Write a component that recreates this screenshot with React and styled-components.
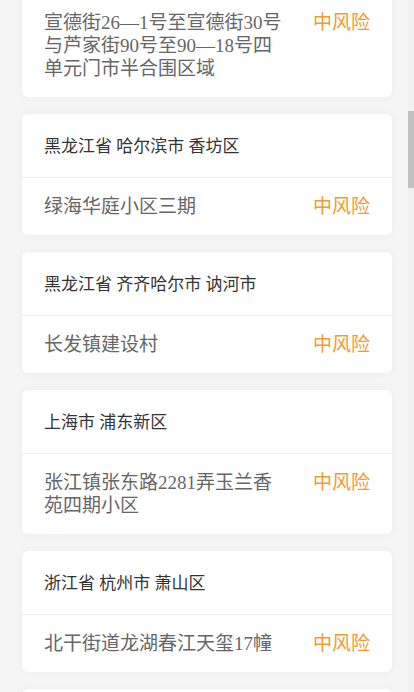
import React, { useLayoutEffect, useRef, useState } from "react";
import styled, { createGlobalStyle } from "styled-components";

const GlobalStyle = createGlobalStyle`
  html, body {
    margin: 0;
    padding: 0;
    background: #f5f5f5;
    font-family: "Liberation Serif", "Noto Sans CJK SC", serif;
  }
  * { box-sizing: border-box; }
`;

const Scroller = styled.div`
  position: relative;
  height: 100vh;
  overflow-y: auto;
  background: #f5f5f5;
  scrollbar-width: none;
  &::-webkit-scrollbar {
    display: none;
  }
`;

const Track = styled.div`
  position: fixed;
  top: 0;
  right: 0;
  width: 6px;
  height: 100vh;
  background: #f1f1f1;
`;

const Thumb = styled.div`
  position: absolute;
  left: 0;
  width: 6px;
  background: #c1c1c1;
`;

const List = styled.div`
  display: flex;
  flex-direction: column;
  gap: 17px;
  padding: 17px 22px;
`;

const Card = styled.section`
  background: #fff;
  border-radius: 6px;
  box-shadow: 0 0 8px rgba(0, 0, 0, 0.04);
  overflow: hidden;
`;

const Region = styled.div`
  padding: 21px 22px 19px;
  font-size: 17px;
  line-height: 23px;
  color: #333;
  border-bottom: 1px solid #ececec;
`;

const Detail = styled.div`
  display: flex;
  justify-content: space-between;
  align-items: flex-start;
  padding: 17px 22px;
`;

const Address = styled.div`
  width: 242px;
  font-size: 19px;
  line-height: 23px;
  color: #666;
`;

const Risk = styled.span`
  flex: none;
  font-size: 19px;
  line-height: 23px;
  color: ${(p) => (p.$level === "high" ? "#e0452b" : "#f29a2e")};
`;

const AREAS = [
  ["黑龙江省 哈尔滨市 道里区", "安静街道爱建社区爱建新城小区B区"],
  ["黑龙江省 哈尔滨市 道外区", "靖宇街道南勋陶瓷城南十四道街19号院"],
  ["黑龙江省 哈尔滨市 南岗区", "和兴路街道学府四道街8号小区"],
  ["黑龙江省 哈尔滨市 香坊区", "公滨路保利水韵长滩小区"],
  ["黑龙江省 哈尔滨市 松北区", "利民街道学院路1号"],
  ["黑龙江省 哈尔滨市 平房区", "友协街道友协大街联盟小区及周边门市"],
  ["黑龙江省 哈尔滨市 南岗区", "宣德街26—1号至宣德街30号与芦家街90号至90—18号四单元门市半合围区域", "target"],
  ["黑龙江省 哈尔滨市 香坊区", "绿海华庭小区三期"],
  ["黑龙江省 齐齐哈尔市 讷河市", "长发镇建设村"],
  ["上海市 浦东新区", "张江镇张东路2281弄玉兰香苑四期小区"],
  ["浙江省 杭州市 萧山区", "北干街道龙湖春江天玺17幢"],
  ["浙江省 杭州市 西湖区", "蒋村街道西溪诚园12幢"],
  ["浙江省 宁波市 北仑区", "霞浦街道下三山村"],
  ["浙江省 绍兴市 上虞区", "曹娥街道金鼎花苑"],
  ["江苏省 南京市 江宁区", "禄口街道石埝村"],
  ["江苏省 扬州市 邗江区", "汊河街道中集紫金文昌小区"],
  ["江苏省 苏州市 吴中区", "长桥街道新家园小区"],
  ["河南省 郑州市 二七区", "京广路街道长江路1号院"],
  ["河南省 郑州市 金水区", "丰产路街道农科路小区"],
  ["河南省 许昌市 禹州市", "钧台街道八一社区"],
  ["河南省 安阳市 文峰区", "宝莲寺镇南流寺村"],
  ["云南省 西双版纳州 勐腊县", "勐腊镇曼龙代村委会"],
  ["云南省 德宏州 瑞丽市", "姐告国门社区"],
  ["内蒙古自治区 呼和浩特市 新城区", "东街街道海东路小区"],
  ["内蒙古自治区 额济纳旗", "达来呼布镇怡和家园小区"],
  ["陕西省 西安市 雁塔区", "电子城街道丈八五路佳家园"],
  ["陕西省 西安市 长安区", "郭杜街道西北大学南校区"],
  ["陕西省 咸阳市 秦都区", "人民路街道东方花园小区"],
  ["四川省 成都市 郫都区", "犀浦街道恒大天府半岛"],
  ["四川省 成都市 锦江区", "春熙路街道正科甲巷"],
  ["广东省 深圳市 南山区", "招商街道四海社区"],
  ["广东省 深圳市 龙岗区", "布吉街道长龙社区"],
  ["广东省 东莞市", "长安镇锦厦社区"],
  ["广东省 广州市 番禺区", "钟村街道祈福新邨"],
  ["天津市 津南区", "辛庄镇辛庄村"],
  ["天津市 河北区", "鸿顺里街道靖江路小区"],
  ["北京市 丰台区", "新村街道富锦嘉园"],
  ["北京市 朝阳区", "麦子店街道枣营北里"],
  ["辽宁省 大连市 庄河市", "城关街道仙湖社区"],
  ["辽宁省 沈阳市 和平区", "长白街道万科城小区"],
  ["吉林省 长春市 朝阳区", "永昌街道西安大路小区"],
  ["吉林省 吉林市 船营区", "致和街道锦江社区"],
  ["山东省 青岛市 李沧区", "九水街道万科城"],
  ["福建省 厦门市 同安区", "西柯街道下山头村"],
];

export default function App() {
  const scrollerRef = useRef(null);
  const targetRef = useRef(null);
  const [thumb, setThumb] = useState({ top: 0, height: 0 });

  const measure = () => {
    const el = scrollerRef.current;
    if (!el) return;
    const { scrollTop, scrollHeight, clientHeight } = el;
    setThumb({
      top: (scrollTop / scrollHeight) * clientHeight,
      height: (clientHeight / scrollHeight) * clientHeight,
    });
  };

  useLayoutEffect(() => {
    if (scrollerRef.current && targetRef.current) {
      scrollerRef.current.scrollTop = targetRef.current.offsetTop + 70;
    }
    measure();
  }, []);

  return (
    <>
      <GlobalStyle />
      <Scroller ref={scrollerRef} onScroll={measure}>
        <List>
          {AREAS.map(([region, address, mark], i) => (
            <Card key={i} ref={mark === "target" ? targetRef : undefined}>
              <Region>{region}</Region>
              <Detail>
                <Address>{address}</Address>
                <Risk $level="mid">中风险</Risk>
              </Detail>
            </Card>
          ))}
        </List>
      </Scroller>
      <Track>
        <Thumb style={{ top: thumb.top, height: thumb.height }} />
      </Track>
    </>
  );
}
